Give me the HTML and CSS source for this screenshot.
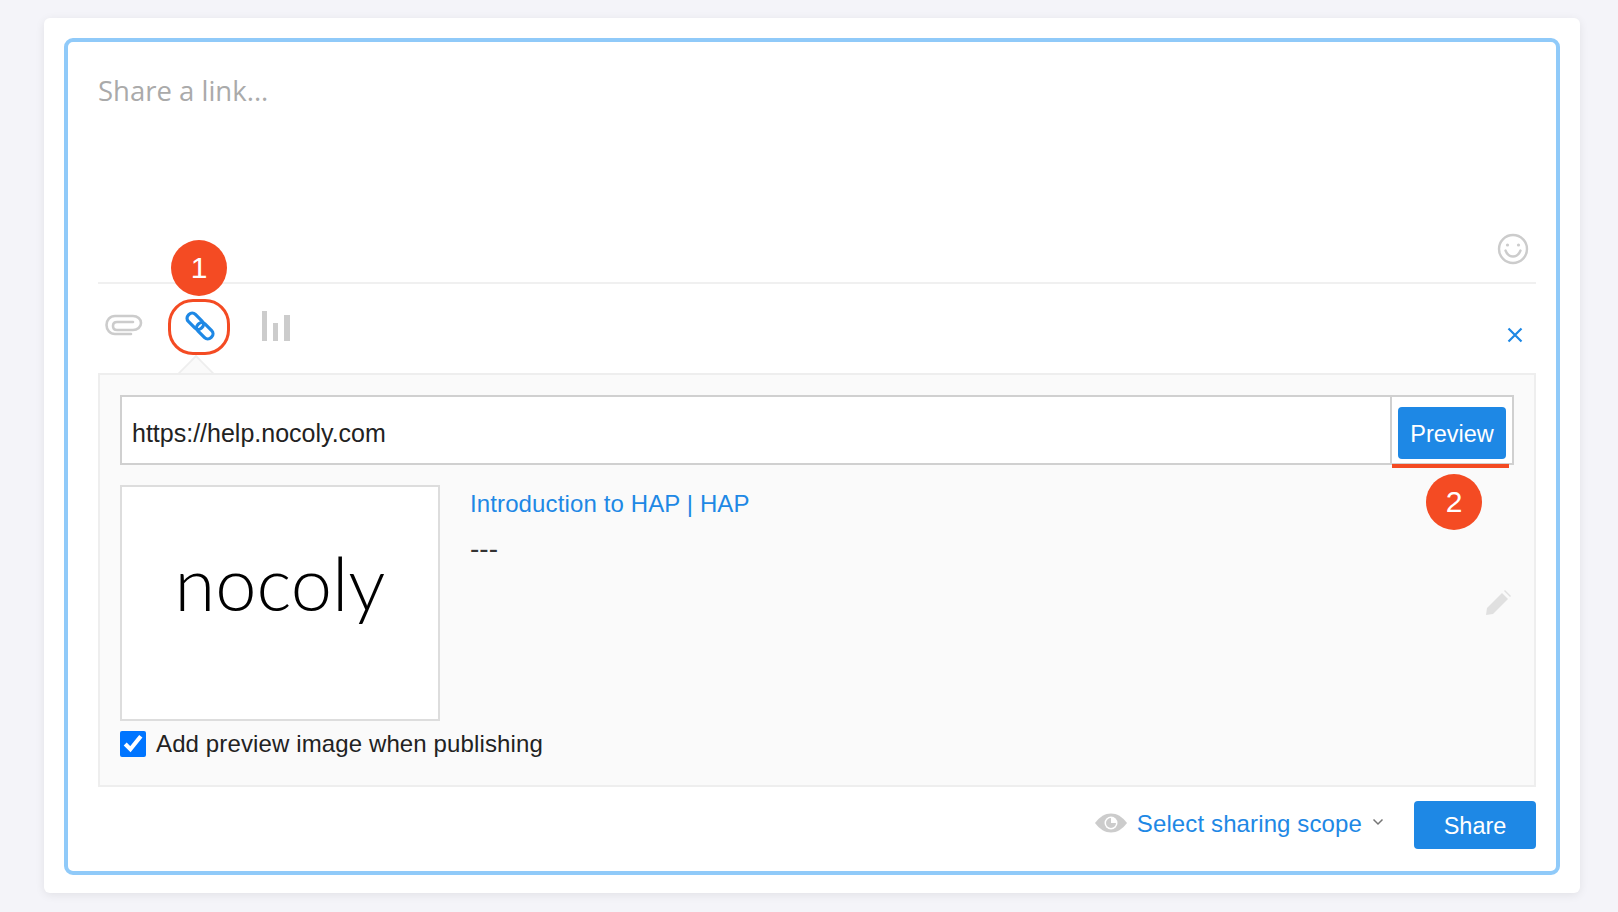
FILE: index.html
```html
<!DOCTYPE html>
<html lang="en">
<head>
<meta charset="utf-8">
<title>Share a link</title>
<link rel="stylesheet" href="styles.css">
</head>
<body>
<main class="page">
  <section class="card">
    <div class="frame">
      <div class="editor">
        <div class="placeholder">Share a link...</div>
        <svg class="smile" width="32" height="32" viewBox="0 0 32 32" fill="none" stroke="#ccc" stroke-width="2.400">
          <circle cx="16" cy="16" r="14"/>
          <path d="M8.500 17.500c1.500 4 4.200 6 7.500 6s6-2 7.500-6" stroke-linecap="round"/>
          <circle cx="10.500" cy="12" r="1.600" fill="#ccc" stroke="none"/>
          <circle cx="21.500" cy="12" r="1.600" fill="#ccc" stroke="none"/>
        </svg>
      </div>
      <div class="toolbar">
        <svg class="tool clip" width="38" height="22" viewBox="0 0 38 22" fill="none" stroke="#ccc" stroke-width="2.600" stroke-linecap="round">
          <path d="M26 20H10C5 20 1.500 16 1.500 11S5 2 10 2h18c4.500 0 8 3 8 7s-3.500 7-8 7H12c-2.500 0-4-1.500-4-4s1.500-4 4-4h16"/>
        </svg>
        <svg class="tool link" width="32" height="32" viewBox="0 0 32 32" fill="none" stroke="#1e88e5" stroke-width="3.200">
          <g transform="rotate(45 16 16)">
            <rect x="0" y="11" width="18.500" height="10" rx="4.500"/>
            <rect x="13.500" y="11" width="18.500" height="10" rx="4.500"/>
          </g>
        </svg>
        <svg class="tool bars" width="30" height="30" viewBox="0 0 30 30" fill="#ccc">
          <rect x="1" y="0" width="5" height="30"/>
          <rect x="12" y="12" width="5" height="18"/>
          <rect x="23" y="4" width="6" height="26"/>
        </svg>
        <svg class="close" width="16" height="16" viewBox="0 0 16 16" stroke="#1e88e5" stroke-width="2.200" fill="none">
          <path d="M1.500 1.500l13 13M14.500 1.500l-13 13"/>
        </svg>
        <span class="oval"></span>
        <span class="badge badge-one">1</span>
      </div>
      <div class="panel">
        <span class="notch"></span>
        <div class="url-row">
          <input class="url-input" type="text" value="https://help.nocoly.com" aria-label="Link">
          <div class="preview-cell"><button class="btn preview-btn" type="button">Preview</button></div>
          <span class="underline"></span>
          <span class="badge badge-two">2</span>
        </div>
        <div class="result">
          <div class="thumb"><span class="logo">nocoly</span></div>
          <div class="meta">
            <a class="title">Introduction to HAP | HAP</a>
            <p class="desc">---</p>
          </div>
          <svg class="pencil" width="26" height="26" viewBox="0 0 26 26" fill="#e0e0e0">
            <path d="M1 25l1-7L17 3l6 6L8 24z"/>
            <path d="M19 1l1-1 6 6-1 1z"/>
          </svg>
        </div>
        <label class="check-row"><input class="check" type="checkbox" checked>Add preview image when publishing</label>
      </div>
      <div class="footer">
        <svg class="eye" width="32" height="20" viewBox="0 0 32 20">
          <path d="M0 10C5 3.500 10 .5 16 .5S27 3.500 32 10c-5 6.500-10 9.500-16 9.500S5 16.500 0 10z" fill="#ccc"/>
          <circle cx="16" cy="10" r="6.500" fill="#fff"/>
          <path d="M16 5a5 5 0 1 0 5 5h-5z" fill="#ccc"/>
        </svg>
        <a class="scope">Select sharing scope</a>
        <svg class="chevron" width="12" height="8" viewBox="0 0 12 8" fill="none" stroke="#757575" stroke-width="1.500"><path d="M1.500 1.500L6 6l4.500-4.500"/></svg>
        <button class="btn share-btn" type="button">Share</button>
      </div>
    </div>
  </section>
</main>
</body>
</html>
```

FILE: styles.css
```css
* { box-sizing: border-box; }
html, body { margin: 0; height: 100%; }
body {
  background: #f4f4f9;
  font-family: "Liberation Sans", Arial, sans-serif;
  overflow: hidden;
}
.page { padding: 18px 38px 0 44px; }
.card {
  background: #fff;
  border-radius: 6px;
  padding: 20px;
  height: 875px;
  box-shadow: 0 2px 10px rgba(0, 0, 0, .08);
}
.frame {
  height: 837px;
  border: 4px solid #90caf9;
  border-radius: 9px;
  padding: 0 20px 0 30px;
  display: flex;
  flex-direction: column;
}
.editor {
  height: 242px;
  border-bottom: 2px solid #f0f0f0;
  position: relative;
  display: flex;
  justify-content: space-between;
  align-items: flex-end;
  padding: 0 7px 17px 0;
}
.placeholder {
  position: absolute;
  left: 0;
  top: 29px;
  font-family: "Open Sans", "Noto Sans", sans-serif;
  font-size: 27.500px;
  line-height: 40px;
  color: #aaa;
}
.smile { margin-left: auto; }
.toolbar {
  height: 89px;
  position: relative;
  display: flex;
  align-items: flex-start;
  padding: 28px 0 0 7px;
}
.tool { flex: none; }
.clip { margin-top: 2px; }
.link { margin: -2px 0 0 41px; }
.bars { margin: -1px 0 0 45px; }
.close { margin: 15px 13px 0 auto; }
.oval {
  position: absolute;
  left: 70px;
  top: 15px;
  width: 62px;
  height: 56px;
  border: 3px solid #f44b23;
  border-radius: 25px;
}
.badge {
  position: absolute;
  width: 56px;
  height: 56px;
  border-radius: 50%;
  background: #f44b23;
  color: #fff;
  font-size: 30px;
  line-height: 56px;
  text-align: center;
}
.badge-one { left: 73px; top: -44px; }
.badge-two { left: 1304px; top: 77px; }
.panel {
  height: 414px;
  position: relative;
  background: #fafafa;
  border: 2px solid #eee;
  padding: 20px 20px 0 20px;
}
.notch {
  position: absolute;
  left: 83px;
  top: -15px;
  width: 26px;
  height: 26px;
  background: #fafafa;
  border-top: 2px solid #eee;
  border-left: 2px solid #eee;
  transform: rotate(45deg);
  clip-path: polygon(0 0, 100% 0, 0 100%);
}
.url-row {
  position: relative;
  display: flex;
  height: 70px;
  border: 2px solid #d0d0d0;
  background: #fff;
}
.url-input {
  flex: 1;
  min-width: 0;
  border: 0;
  outline: 0;
  background: transparent;
  padding: 6px 10px 0;
  font: 25px "Liberation Sans", Arial, sans-serif;
  color: #222;
}
.preview-cell {
  width: 122px;
  border-left: 2px solid #d0d0d0;
  padding: 10px 5px 0 6px;
}
.btn {
  border: 0;
  background: #1e88e5;
  color: #fff;
  font: 23.500px "Liberation Sans", Arial, sans-serif;
  border-radius: 4px;
  padding: 2px 0 0;
}
.preview-btn { width: 108px; height: 52px; display: block; }
.underline {
  position: absolute;
  left: 1270px;
  top: 67px;
  width: 117px;
  height: 4px;
  background: #f44b23;
}
.result {
  display: flex;
  align-items: flex-start;
  margin-top: 20px;
}
.thumb {
  flex: none;
  width: 320px;
  height: 236px;
  background: #fff;
  border: 2px solid #ddd;
  display: flex;
  justify-content: center;
  padding-top: 51px;
}
.logo {
  font-family: Lato, sans-serif;
  font-weight: 300;
  font-size: 74px;
  line-height: 90px;
  color: #000;
}
.meta { flex: 1; padding: 0 0 0 30px; }
.title {
  display: block;
  font-size: 24px;
  line-height: 36px;
  letter-spacing: .12px;
  padding-top: 1px;
  color: #1e88e5;
}
.desc {
  margin: 9px 0 0;
  font-size: 28px;
  line-height: 36px;
  color: #333;
}
.pencil { margin: 105px 3px 0 0; flex: none; }
.check-row {
  display: flex;
  align-items: center;
  gap: 10px;
  margin-top: 10px;
  height: 26px;
  font-size: 24px;
  letter-spacing: .12px;
  color: #222;
}
.check {
  width: 26px;
  height: 26px;
  margin: 0;
  accent-color: #0075ff;
}
.footer {
  flex: 1;
  display: flex;
  align-items: flex-start;
  padding-top: 14px;
}
.eye { margin: 12px 0 0 auto; }
.scope {
  margin: 7px 0 0 10px;
  font-size: 24px;
  line-height: 32px;
  letter-spacing: .12px;
  color: #1e88e5;
}
.chevron { margin: 17px 0 0 10px; }
.share-btn { width: 122px; height: 48px; margin-left: 30px; }
```
